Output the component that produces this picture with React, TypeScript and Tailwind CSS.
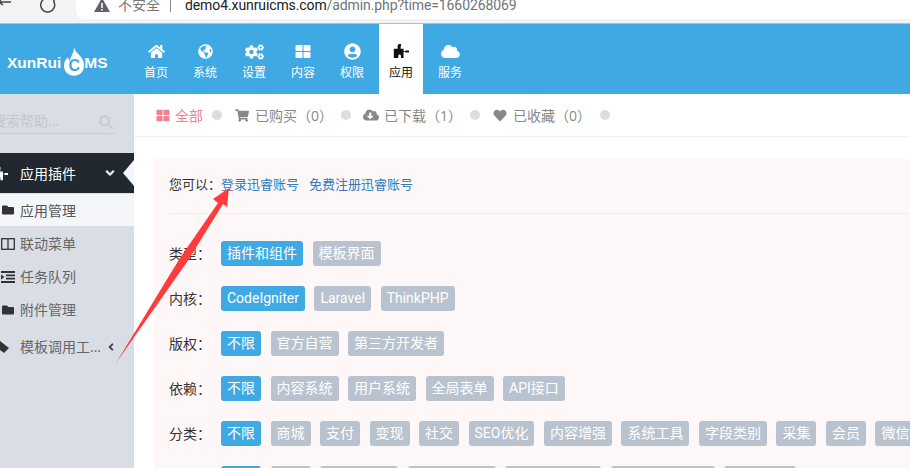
import { FaHome, FaGlobeAmericas, FaCogs, FaThLarge, FaUserCircle, FaCloud, FaShoppingCart, FaCloudDownloadAlt, FaHeart, FaFolder, FaSearch, FaAngleDown, FaAngleLeft } from "react-icons/fa";
import type { ReactNode } from "react";

const Puzzle = ({ className }: { className?: string }) => (
  <svg viewBox="0 0 18 16" className={className} fill="currentColor">
    <path d="M6 0h2.4v2.2L8 3.6V5h3.2v2.6h1.6l.7-.7H17v2.2h-3.5l-.7-.7h-1.600V15H8.400v-2.200c0-1-.6-1.600-1.400-1.600s-1.400.6-1.400 1.600V15H.8V5H5V3.600l-.4-1.400z" />
  </svg>
);

const Logo = () => (
  <div className="w-[134px] flex items-center pl-[7px] pt-[7px] text-white font-['Liberation_Sans',sans-serif] font-bold text-[15.5px] whitespace-nowrap">
    <span>XunRui</span>
    <span className="relative ml-[3px] w-[20px] h-[24px] flex items-center justify-center">
      <svg viewBox="0 0 24 34" className="absolute left-0 bottom-[-2px] w-[20px] h-[31px]" fill="white">
        <path d="M12 0c1 4 3 6 6 9 3 3 6 7 6 13 0 7-5 12-12 12S0 29 0 22c0-4 2-8 5-10 0 2 1 4 2 4 1-5 5-9 5-16z" />
      </svg>
      <span className="relative top-[3px] text-[#3fa9e3] text-[16px] leading-none">C</span>
    </span>
    <span>MS</span>
  </div>
);

const NAV: { label: string; icon: ReactNode; active?: boolean }[] = [
  { label: "首页", icon: <FaHome className="w-[17px] h-[15px]" /> },
  { label: "系统", icon: <FaGlobeAmericas className="w-[15px] h-[15px]" /> },
  { label: "设置", icon: <FaCogs className="w-[19px] h-[16px]" /> },
  { label: "内容", icon: <FaThLarge className="w-[16px] h-[15px]" /> },
  { label: "权限", icon: <FaUserCircle className="w-[17px] h-[17px]" /> },
  { label: "应用", icon: <Puzzle className="w-[17px] h-[15px]" />, active: true },
  { label: "服务", icon: <FaCloud className="w-[19px] h-[15px]" /> },
];

function ColumnIcon() {
  return (
    <svg viewBox="0 0 14 12" className="w-[14px] h-[12px]" fill="none" stroke="currentColor" strokeWidth="1.300">
      <rect x=".7" y=".7" width="12.600" height="10.600" />
      <path d="M7 .7v10.600" />
    </svg>
  );
}

function TaskIcon() {
  return (
    <svg viewBox="0 0 14 12" className="w-[14px] h-[12px]" fill="currentColor">
      <path d="M0 0h14v2H0zM5 3.400h9v1.800H5zM5 6.800h9v1.800H5zM0 10h14v2H0zM0 3.500 3.500 6 0 8.500z" />
    </svg>
  );
}

const SUB = [
  { icon: <ColumnIcon />, label: "联动菜单" },
  { icon: <TaskIcon />, label: "任务队列" },
  { icon: <FaFolder className="w-[14px] h-[12px]" />, label: "附件管理" },
];

const ROWS: { label: string; tags: string[] }[] = [
  { label: "类型", tags: ["插件和组件", "模板界面"] },
  { label: "内核", tags: ["CodeIgniter", "Laravel", "ThinkPHP"] },
  { label: "版权", tags: ["不限", "官方自营", "第三方开发者"] },
  { label: "依赖", tags: ["不限", "内容系统", "用户系统", "全局表单", "API接口"] },
  { label: "分类", tags: ["不限", "商城", "支付", "变现", "社交", "SEO优化", "内容增强", "系统工具", "字段类别", "采集", "会员", "微信"] },
];

const LAST = [
  { text: "不限", cls: "w-[40px]" },
  { text: "免费", cls: "w-[40px]" },
  { text: "1-50元", cls: "w-[78px]" },
  { text: "50-100元", cls: "w-[88px]" },
  { text: "100-200元", cls: "w-[96px]" },
  { text: "200-1000元", cls: "w-[104px]" },
  { text: "1000元", cls: "w-[72px]" },
];

const Tag = ({ children, on, className }: { children: ReactNode; on?: boolean; className?: string }) => (
  <span className={`h-[25px] px-[6px] flex items-center justify-center rounded-[3px] text-[14px] text-white whitespace-nowrap shrink-0 font-['Roboto','Noto_Sans_CJK_SC',sans-serif] ${on ? "bg-[#3fa9e3]" : "bg-[#b9c3cf]"} ${className ?? ""}`}>
    {children}
  </span>
);

const Dot = ({ className }: { className: string }) => <span className={`w-[10px] h-[10px] rounded-full bg-[#dddddd] shrink-0 ${className}`} />;

export default function App() {
  return (
    <div className="relative w-[910px] h-[468px] overflow-hidden bg-white font-['Open_Sans','Noto_Sans_CJK_SC',sans-serif]">
      {/* browser chrome */}
      <div className="h-[24px] bg-[#f1f3f4] border-b border-[#bdbdbd] flex items-start overflow-hidden">
        <div className="w-[76px] h-[18px] relative text-[#444]">
          <svg viewBox="0 0 60 14" className="absolute left-0 top-0 w-[60px] h-[14px]" fill="none" stroke="currentColor" strokeWidth="1.500">
            <path d="M-2 2h13M3-3 -1 2l4 3" />
            <path d="M54 2a7 7 0 1 1-6-4" />
            <path d="M48 -1l6 .5v3" />
          </svg>
        </div>
        <div className="flex-1 h-[19px] bg-white rounded-bl-[8px] flex items-center pl-[18px] text-[14px] leading-none">
          <svg viewBox="0 0 16 12" className="w-[16px] h-[12px] -mt-[7px] text-[#5f6368] shrink-0" fill="currentColor">
            <path d="M8 -2 16 12H0zM7.200 3v5h1.600V3zm0 6v1.500h1.600V9z" fillRule="evenodd" />
          </svg>
          <span className="ml-[8px] -mt-[10px] text-[#777]">不安全</span>
          <span className="ml-[10px] -mt-[10px] w-px h-[15px] bg-[#888]" />
          <span className="ml-[14px] -mt-[9px] whitespace-nowrap font-['Roboto',sans-serif] text-[14px] tracking-[-0.1px] text-[#202124]">
            demo4.xunruicms.com<span className="text-[#70757a]">/admin.php?time=1660268069</span>
          </span>
        </div>
      </div>

      {/* header */}
      <div className="h-[70px] bg-[#3fa9e3] flex">
        <Logo />
        <div className="flex gap-[5px]">
          {NAV.map((n) => (
            <div key={n.label} className={`w-[44px] flex flex-col items-center pt-[18px] text-[12px] ${n.active ? "bg-white text-[#111]" : "text-white"}`}>
              <div className="h-[19px] flex items-center">{n.icon}</div>
              <div className="mt-[3px] leading-[18px]">{n.label}</div>
            </div>
          ))}
        </div>
      </div>

      <div className="flex h-[374px]">
        {/* sidebar */}
        <div className="w-[134px] shrink-0 bg-[#d9dde5] pt-[17px]">
          <div className="ml-[-8px] w-[124px] h-[23px] border-b border-[#c8ccd3] flex items-center justify-between pr-[3px] pb-[4px] text-[14px] text-[#c3c7cd]">
            <span>搜索帮助...</span>
            <FaSearch className="w-[14px] h-[14px] mt-[3px] text-[#c8ccd2]" />
          </div>
          <div className="mt-[19px] relative h-[40px] bg-[#22282f] flex items-center text-white text-[14px]">
            <Puzzle className="absolute left-[-7px] top-[14px] w-[16px] h-[14px]" />
            <span className="ml-[20px]">应用插件</span>
            <FaAngleDown className="absolute left-[103px] top-[13px] w-[14px] h-[14px] text-[#dfe7ee]" />
            <span className="absolute right-0 top-[7px] w-0 h-0 border-y-[13px] border-y-transparent border-r-[11px] border-r-[#f5f6f9]" />
          </div>
          <div className="mt-[1px] h-[32px] bg-[#f5f6f9] flex items-center text-[14px] text-[#555]">
            <FaFolder className="ml-[1px] w-[14px] h-[12px] text-[#333]" />
            <span className="ml-[5px]">应用管理</span>
          </div>
          <div className="pt-[1px]">
            {SUB.map((s) => (
              <div key={s.label} className="h-[33px] flex items-center text-[14px] text-[#666]">
                <span className="ml-[1px] w-[14px] text-[#333]">{s.icon}</span>
                <span className="ml-[5px]">{s.label}</span>
              </div>
            ))}
            <div className="mt-[4px] h-[33px] flex items-center text-[14px] text-[#666]">
              <svg viewBox="0 0 9 12" className="w-[9px] h-[12px] text-[#333]" fill="currentColor">
                <path d="M0 0 9 7 4 12 -4 6z" />
              </svg>
              <span className="ml-[11px]">模板调用工...</span>
              <FaAngleLeft className="ml-[5px] w-[10px] h-[12px] text-[#444]" />
            </div>
          </div>
        </div>

        {/* content */}
        <div className="flex-1 min-w-0">
          <div className="h-[43px] border-b border-[#eef1f5] flex items-center pl-[22px] text-[14px] text-[#888]">
            <FaThLarge className="w-[14px] h-[13px] text-[#f0808c]" />
            <span className="ml-[5px] text-[#f0808c]">全部</span>
            <Dot className="ml-[9px]" />
            <FaShoppingCart className="ml-[13px] w-[14px] h-[13px] text-[#888]" />
            <span className="ml-[6px]">已购买（0）</span>
            <Dot className="ml-[8px]" />
            <FaCloudDownloadAlt className="ml-[12px] w-[16px] h-[14px] text-[#888]" />
            <span className="ml-[5px]">已下载（1）</span>
            <Dot className="ml-[8px]" />
            <FaHeart className="ml-[13px] w-[14px] h-[13px] text-[#888]" />
            <span className="ml-[6px]">已收藏（0）</span>
            <Dot className="ml-[9px]" />
          </div>
          <div className="mt-[22px] ml-[20px] bg-[#fdf7f7] pl-[15px] h-[400px]">
            <div className="h-[55px] border-b border-[#eaedf2] flex items-center pb-[3px] text-[13px] text-[#333]">
              <span className="w-[52px] whitespace-nowrap">您可以：</span>
              <span className="text-[#337ab7]">登录迅睿账号</span>
              <span className="ml-[10px] text-[#337ab7]">免费注册迅睿账号</span>
            </div>
            <div className="pt-[27px] flex flex-col gap-[20px]">
              {ROWS.map((r) => (
                <div key={r.label} className="flex items-center">
                  <span className="w-[52px] shrink-0 text-[14px] text-[#333]">{r.label}：</span>
                  <div className="flex gap-[9.5px]">
                    {r.tags.map((t, i) => (
                      <Tag key={t} on={i === 0}>{t}</Tag>
                    ))}
                  </div>
                </div>
              ))}
              <div className="flex items-center">
                <span className="w-[52px] shrink-0 text-[14px] text-[#333]">价格：</span>
                <div className="flex gap-[9.5px]">
                  {LAST.map((t, i) => (
                    <Tag key={t.text} on={i === 0} className={t.cls}>{t.text}</Tag>
                  ))}
                </div>
              </div>
            </div>
          </div>
        </div>
      </div>

      {/* red annotation arrow */}
      <svg viewBox="0 0 910 468" className="absolute inset-0 w-[910px] h-[468px] pointer-events-none" fill="#ff3b3b">
        <polygon points="116,363 180,258 218,203 213,199 229,188 227,207 223,204 187,262" />
      </svg>
    </div>
  );
}
